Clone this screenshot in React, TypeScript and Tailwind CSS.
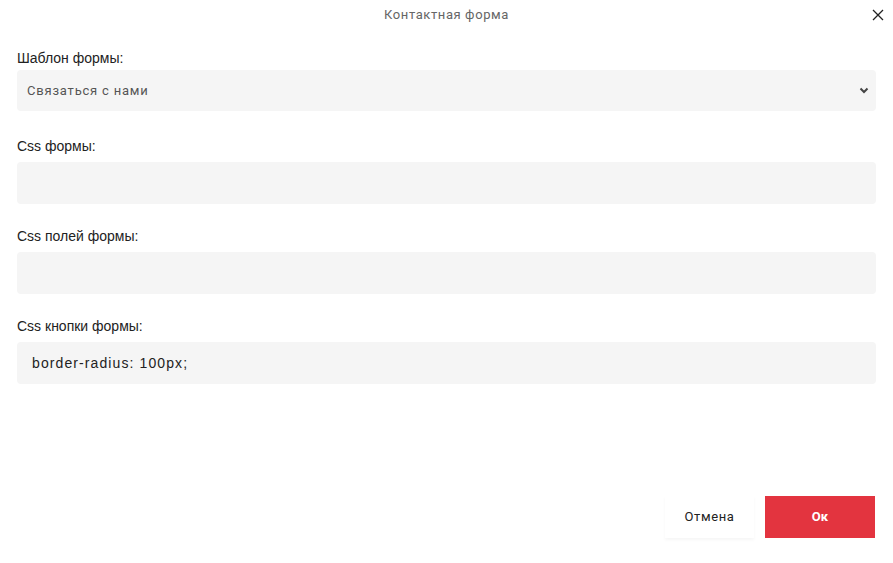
import React from "react";

function Field({ label, children, className = "", mb = "mb-[8px]", h = "h-[42px]" }: { label: string; children?: React.ReactNode; className?: string; mb?: string; h?: string }) {
  return (
    <div className={"flex flex-col " + className}>
      <div className={"h-[16px] leading-[16px] text-[14px] text-[#222] font-['Liberation_Sans',Arial,sans-serif] " + mb}>{label}</div>
      <div className={h + " rounded-[4px] bg-[#f5f5f5] flex items-center"}>{children}</div>
    </div>
  );
}

export default function App() {
  return (
    <div className="w-[893px] h-[563px] bg-white flex flex-col relative overflow-hidden">
      <div className="h-[30px] flex items-center justify-center relative">
        <span className="text-[13px] tracking-[0.6px] text-[#666] font-['Roboto',sans-serif]">Контактная форма</span>
        <button className="absolute right-[8px] top-[8px] w-[14px] h-[14px] flex items-center justify-center">
          <svg width="12" height="12" viewBox="0 0 12 12" fill="none" stroke="#222" strokeWidth="1.3">
            <path d="M1 1 L11 11 M11 1 L1 11" />
          </svg>
        </button>
      </div>
      <div className="flex flex-col px-[17px] pt-[20px]">
        <Field label="Шаблон формы:" mb="mb-[4px]" h="h-[41px]" className="mb-[27px]">
          <div className="flex-1 flex items-center justify-between pl-[10px] pr-[7px]">
            <span className="text-[13px] tracking-[0.8px] text-[#555] font-['Roboto',sans-serif]">Связаться с нами</span>
            <svg width="10" height="7" viewBox="0 0 10 7" fill="none" stroke="#444" strokeWidth="2">
              <path d="M1.5 1.5 L5 5 L8.5 1.5" />
            </svg>
          </div>
        </Field>
        <div className="flex flex-col gap-[24px]">
          <Field label="Css формы:" />
          <Field label="Css полей формы:" />
          <Field label="Css кнопки формы:">
            <span className="pl-[15px] text-[14px] tracking-[1.1px] text-[#222] font-['Liberation_Sans',Arial,sans-serif]">border-radius: 100px;</span>
          </Field>
        </div>
      </div>
      <div className="flex-1" />
      <div className="flex justify-end items-center gap-[11px] pr-[18px] pb-[25px]">
        <button className="w-[89px] h-[42px] bg-white shadow-[0_2px_3px_rgba(0,0,0,0.04)] text-[13px] tracking-[0.6px] text-[#222] font-['Roboto',sans-serif]">Отмена</button>
        <button className="w-[110px] h-[42px] bg-[#e3343f] text-white text-[13px] font-bold font-['Roboto',sans-serif]">Ок</button>
      </div>
    </div>
  );
}
